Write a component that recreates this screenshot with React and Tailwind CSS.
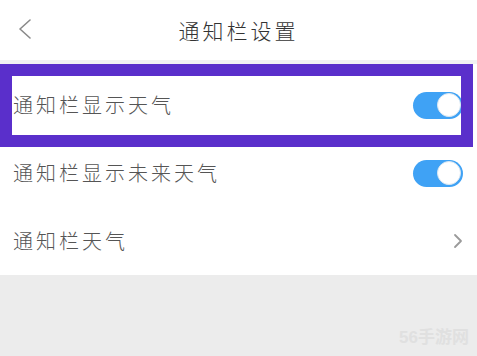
import React from "react";

function Toggle() {
  return (
    <div className="w-[50px] h-[27px] rounded-full bg-[#3fa2f5] flex items-center justify-end pr-[2px]">
      <div className="w-[24px] h-[24px] rounded-full bg-white border border-[#d8e6f2]" />
    </div>
  );
}

const font = { fontFamily: '"Noto Sans CJK SC", "Noto Sans", sans-serif' };

export default function App() {
  return (
    <div className="relative w-[477px] h-[356px] bg-[#ececec] overflow-hidden" style={font}>
      <div className="h-[60px] bg-white flex items-center relative">
        <svg className="absolute left-[18px] top-[19px]" width="14" height="20" viewBox="0 0 14 20">
          <path d="M12 1 L2 10 L12 19" fill="none" stroke="#8a8a8a" strokeWidth="1.6" strokeLinecap="round" strokeLinejoin="round" />
        </svg>
        <div className="w-full text-center text-[21px] tracking-[3px] font-light text-[#333] pt-[2px]">通知栏设置</div>
      </div>
      <div className="h-[4px] bg-[#f1f1f3]" />
      <div className="bg-white pt-[7px]">
        <div className="h-[68px] flex items-center justify-between pl-[13px] pr-[14px]">
          <span className="text-[20px] tracking-[3px] font-light text-[#555]">通知栏显示天气</span>
          <Toggle />
        </div>
        <div className="h-[68px] flex items-center justify-between pl-[13px] pr-[14px]">
          <span className="text-[20px] tracking-[3px] font-light text-[#555]">通知栏显示未来天气</span>
          <Toggle />
        </div>
        <div className="h-[68px] flex items-center justify-between pl-[13px] pr-[14px]">
          <span className="text-[20px] tracking-[3px] font-light text-[#555]">通知栏天气</span>
          <svg width="10" height="16" viewBox="0 0 10 16">
            <path d="M2 2 L8 8 L2 14" fill="none" stroke="#9a9a9a" strokeWidth="1.8" strokeLinecap="round" strokeLinejoin="round" />
          </svg>
        </div>
      </div>
      <div className="absolute left-0 top-[64px] w-[473px] h-[83px] border-[12px] border-[#5a2fcb]" />
      <div className="absolute right-[8px] bottom-[6px] text-[17px] text-[#e0e0e0] font-bold" style={{ fontFamily: '"Liberation Sans", "Noto Sans CJK SC", sans-serif' }}>56手游网</div>
    </div>
  );
}
